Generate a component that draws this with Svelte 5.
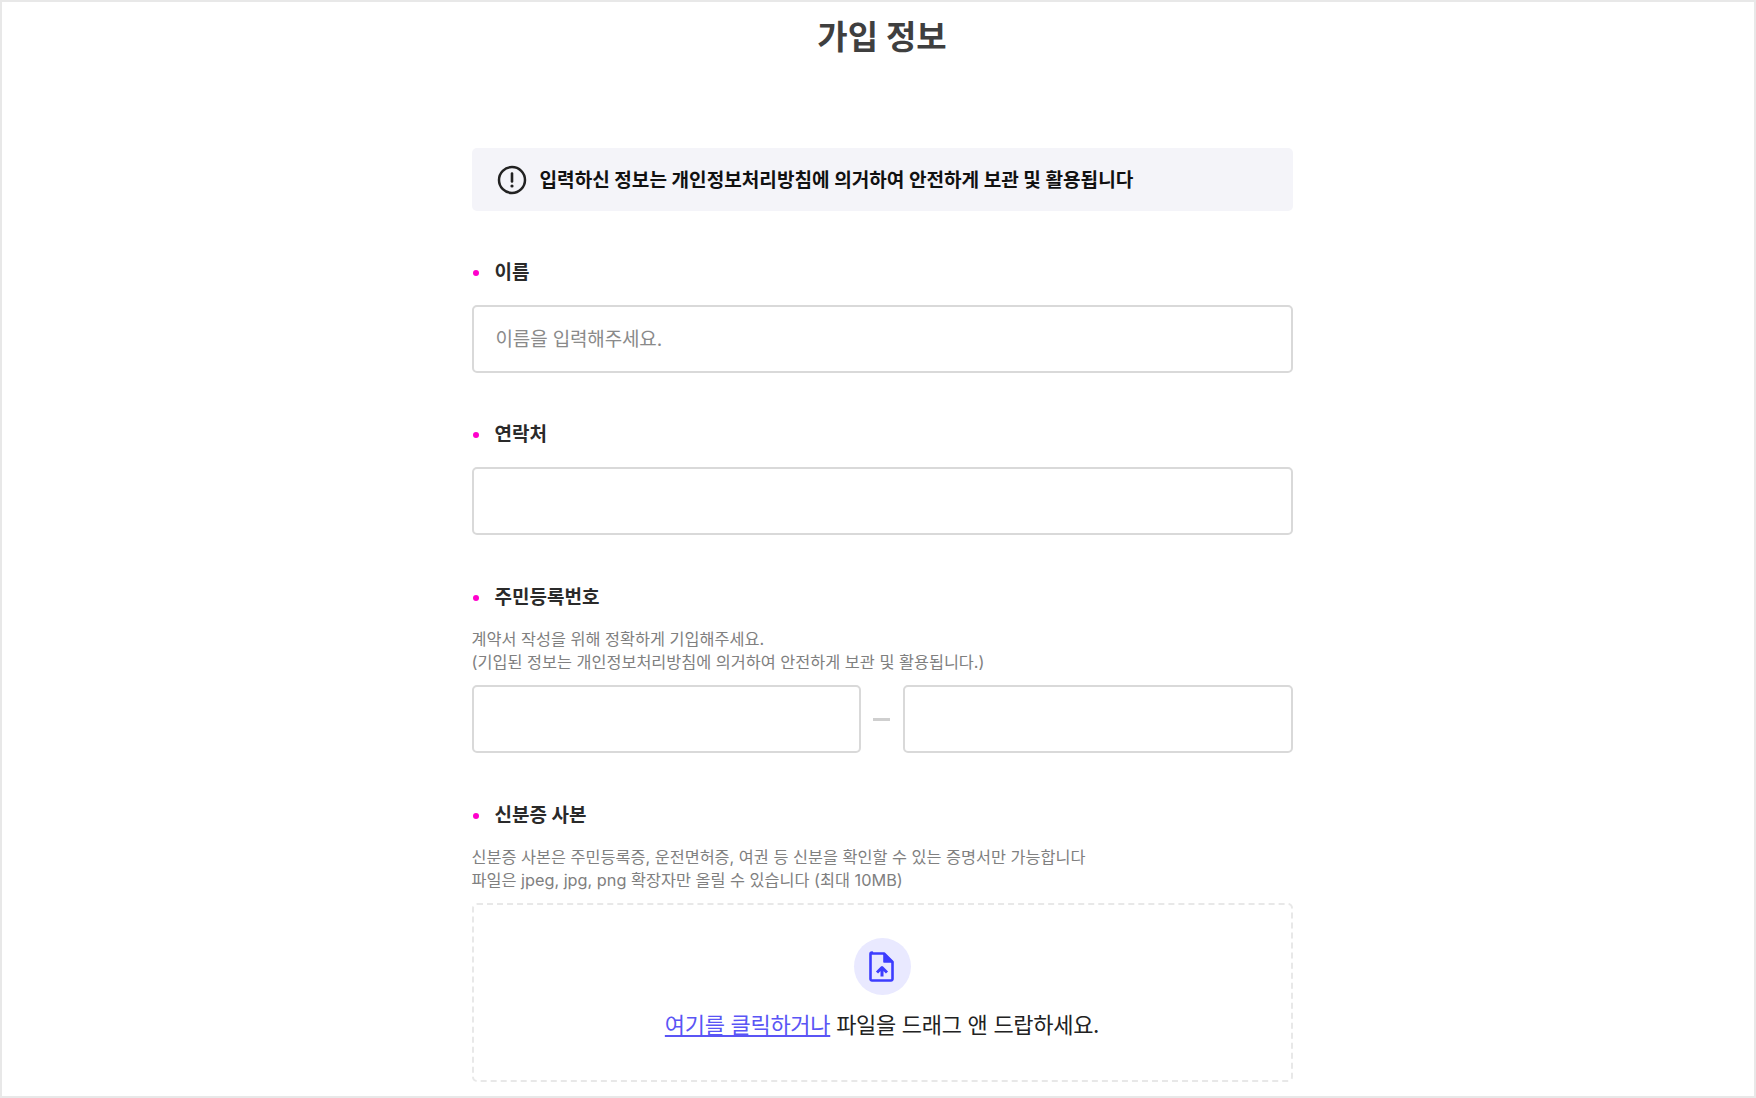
<script lang="ts">
  const idHelp = ['계약서 작성을 위해 정확하게 기입해주세요.', '(기입된 정보는 개인정보처리방침에 의거하여 안전하게 보관 및 활용됩니다.)']
  const fileHelp = ['신분증 사본은 주민등록증, 운전면허증, 여권 등 신분을 확인할 수 있는 증명서만 가능합니다', '파일은 jpeg, jpg, png 확장자만 올릴 수 있습니다 (최대 10MB)']
</script>

<div class="page">
  <h1 class="title">가입 정보</h1>

  <form class="form">
    <div class="notice">
      <svg width="30" height="30" viewBox="0 0 30 30" fill="none">
        <circle cx="15" cy="15" r="13" stroke="#222" stroke-width="2.500" />
        <path d="M15 8.500v8" stroke="#222" stroke-width="2.600" stroke-linecap="round" />
        <circle cx="15" cy="21" r="1.600" fill="#222" />
      </svg>
      <span>입력하신 정보는 개인정보처리방침에 의거하여 안전하게 보관 및 활용됩니다</span>
    </div>

    <section class="field">
      <div class="label">이름</div>
      <input class="input" type="text" placeholder="이름을 입력해주세요." />
    </section>

    <section class="field">
      <div class="label">연락처</div>
      <input class="input" type="text" />
    </section>

    <section class="field wide">
      <div class="label">주민등록번호</div>
      <div class="help">
        {#each idHelp as line}
          <div>{line}</div>
        {/each}
      </div>
      <div class="id-row">
        <input class="input" type="text" />
        <span class="dash"></span>
        <input class="input" type="text" />
      </div>
    </section>

    <section class="field wide">
      <div class="label">신분증 사본</div>
      <div class="help">
        {#each fileHelp as line}
          <div>{line}</div>
        {/each}
      </div>
      <div class="drop">
        <span class="drop-icon">
          <svg width="28" height="32" viewBox="0 0 28 32" fill="none">
            <path d="M4 2.500h12l8.500 8.500v17a1.500 1.500 0 0 1-1.500 1.500h-19a1.500 1.500 0 0 1-1.500-1.500v-25a1.500 1.500 0 0 1 1.500-1.500z" stroke="#3d3dff" stroke-width="2.600" stroke-linejoin="round" />
            <path d="M16 2.500v8.500h8.500z" fill="#3d3dff" stroke="#3d3dff" stroke-width="1.600" stroke-linejoin="round" />
            <path d="M14 25.500v-9M9 21.500l5-5 5 5" stroke="#3d3dff" stroke-width="3" stroke-linejoin="round" />
          </svg>
        </span>
        <p class="drop-text"><a href="#top">여기를 클릭하거나</a> 파일을 드래그 앤 드랍하세요.</p>
      </div>
    </section>
  </form>
</div>

<style>
  :global(body) {
    margin: 0;
    background: #fff;
  }

  .page {
    box-sizing: border-box;
    width: 1756px;
    height: 1098px;
    padding-left: 8px;
    border: 2px solid #e8e8e8;
    overflow: hidden;
    font-family: Inter, "Noto Sans CJK KR", sans-serif;
    color: #222;
  }

  .title {
    margin: 0;
    height: 146px;
    padding-top: 15px;
    box-sizing: border-box;
    text-align: center;
    font-size: 33px;
    line-height: 40px;
    font-weight: 700;
    color: #3f3f3f;
  }

  .form {
    width: 821px;
    margin: 0 auto;
  }

  .notice {
    display: flex;
    align-items: center;
    gap: 13px;
    height: 63px;
    padding-left: 25px;
    background: #f4f4f9;
    border-radius: 5px;
    font-size: 19.100px;
    font-weight: 700;
    color: #111;
  }

  .notice span {
    position: relative;
    top: -1px;
  }

  .field {
    margin-top: 48px;
  }

  .field.wide {
    margin-top: 49px;
  }

  .label {
    position: relative;
    padding: 1px 0 0 23px;
    font-size: 19px;
    line-height: 26px;
    font-weight: 700;
    color: #2a2a2a;
  }

  .label::before {
    content: '';
    position: absolute;
    left: 1px;
    top: 11px;
    width: 6px;
    height: 6px;
    border-radius: 50%;
    background: #f0c;
  }

  .input {
    display: block;
    box-sizing: border-box;
    width: 100%;
    height: 68px;
    margin-top: 19px;
    padding: 0 22px;
    border: 2px solid #d9d9d9;
    border-radius: 5px;
    background: #fff;
    font: inherit;
    font-size: 19px;
    letter-spacing: -0.15px;
  }

  .input::placeholder {
    color: #8a8a8a;
  }

  .help {
    margin-top: 17px;
    font-size: 16.300px;
    line-height: 23px;
    color: #808080;
  }

  .id-row {
    display: flex;
    align-items: center;
    gap: 12.500px;
    margin-top: 11px;
  }

  .id-row .input {
    flex: 1;
    margin-top: 0;
  }

  .id-row .input:first-child {
    flex: 0 0 389px;
  }

  .dash {
    flex: none;
    width: 17px;
    height: 3px;
    background: #cfcfcf;
  }

  .drop {
    display: flex;
    flex-direction: column;
    align-items: center;
    box-sizing: border-box;
    height: 179px;
    margin-top: 11px;
    padding-top: 33px;
    border: 2px dashed #e8e8e8;
    border-radius: 5px;
  }

  .drop-icon {
    display: flex;
    align-items: center;
    justify-content: center;
    width: 57px;
    height: 57px;
    border-radius: 50%;
    background: #e9e9ff;
  }

  .drop-text {
    margin: 15px 0 0;
    font-size: 22px;
    line-height: 30px;
    letter-spacing: -0.3px;
    color: #222;
  }

  .drop-text a {
    color: #5a55f5;
  }
</style>
